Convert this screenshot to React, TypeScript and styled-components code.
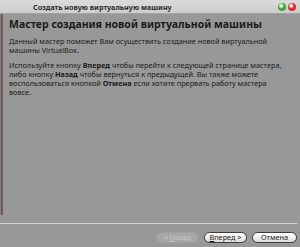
import React from 'react';
import styled, { createGlobalStyle } from 'styled-components';

const GlobalStyle = createGlobalStyle`
  html, body {
    margin: 0;
    padding: 0;
    background: #989898;
  }
  body {
    font-family: "Noto Sans", "DejaVu Sans", sans-serif;
  }
`;

const Window = styled.div`
  width: 300px;
  height: 247px;
  display: flex;
  flex-direction: column;
  background: #989898;
  overflow: hidden;
`;

const TitleBar = styled.div`
  height: 14px;
  flex: none;
  display: flex;
  align-items: center;
  padding: 0 4px 0 33px;
  background: linear-gradient(#dadada, #cdcdcd);
  border-bottom: 1px solid #a4a4a4;
  box-sizing: border-box;
`;

const Title = styled.div`
  flex: 1;
  font-size: 7.2px;
  font-weight: bold;
  color: #2a2a2a;
  white-space: nowrap;
`;

const Lamp = styled.span<{ $color: string }>`
  width: 8px;
  height: 8px;
  border-radius: 50%;
  margin-left: 2px;
  background: radial-gradient(circle at 40% 35%, #ffffffaa 0 1px, ${p => p.$color} 3px);
`;

const Body = styled.div`
  flex: 1;
  display: flex;
  min-height: 0;
`;

const Stripe = styled.div`
  width: 3px;
  height: 201px;
  flex: none;
  background: linear-gradient(90deg, #857c78 0 1px, #6a615d 1px 3px);
`;

const Content = styled.div`
  flex: 1;
  padding: 3px 0 0 6px;
  color: #1a1a1a;
`;

const Heading = styled.div`
  font-size: 10.5px;
  font-weight: bold;
  line-height: 14px;
  white-space: nowrap;
  margin-bottom: 6px;
`;

const Para = styled.p`
  margin: 0 0 6px;
  font-size: 7.3px;
  line-height: 9px;
  white-space: nowrap;
`;

const Footer = styled.div`
  flex: none;
  padding: 0 3px 4px 0;
`;

const Separator = styled.div`
  height: 1px;
  background: #d2d2d2;
  margin-bottom: 8px;
`;

const Buttons = styled.div`
  display: flex;
  justify-content: flex-end;
  gap: 5px;
`;

const Button = styled.button<{ $w: number }>`
  width: ${p => p.$w}px;
  height: 11px;
  padding: 0;
  border-radius: 6px;
  border: 1px solid ${p => (p.disabled ? '#a0a0a0' : '#3c3c3c')};
  background: ${p => (p.disabled ? '#a6a6a6' : 'linear-gradient(#ffffff, #dcdcdc)')};
  color: ${p => (p.disabled ? '#c8c8c8' : '#1a1a1a')};
  font-family: "Noto Sans", "DejaVu Sans", sans-serif;
  font-size: 7.3px;
  line-height: 9px;
  white-space: nowrap;
  u { text-decoration: underline; }
`;

export default function App() {
  return (
    <>
      <GlobalStyle />
      <Window>
        <TitleBar>
          <Title>Создать новую виртуальную машину</Title>
          <Lamp $color="#3aa830" />
          <Lamp $color="#d42a2a" />
        </TitleBar>
        <Body>
          <Stripe />
          <Content>
            <Heading>Мастер создания новой виртуальной машины</Heading>
            <Para>
              Данный мастер поможет Вам осуществить создание новой виртуальной
              <br />
              машины VirtualBox.
            </Para>
            <Para>
              Используйте кнопку <b>Вперед</b> чтобы перейти к следующей странице мастера,
              <br />
              либо кнопку <b>Назад</b> чтобы вернуться к предыдущей. Вы также можете
              <br />
              воспользоваться кнопкой <b>Отмена</b> если хотите прервать работу мастера
              <br />
              вовсе.
            </Para>
          </Content>
        </Body>
        <Footer>
          <Separator />
          <Buttons>
            <Button $w={43} disabled>
              &lt; <u>Н</u>азад
            </Button>
            <Button $w={43}>
              <u>В</u>перед &gt;
            </Button>
            <Button $w={45}>Отмена</Button>
          </Buttons>
        </Footer>
      </Window>
    </>
  );
}
